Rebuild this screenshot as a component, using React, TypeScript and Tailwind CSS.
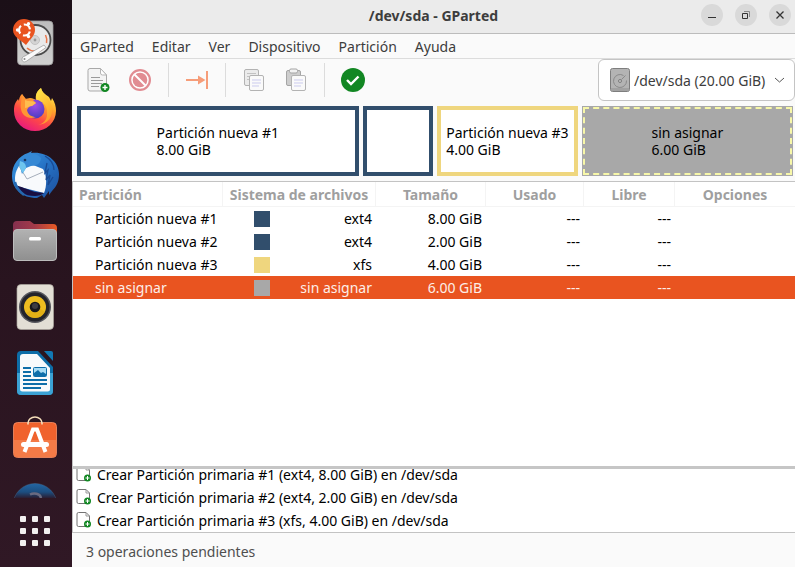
import type { ReactNode } from "react";

const NAVY = "bg-[#314e6c]";
const SAND = "bg-[#efd67e]";
const GREY = "bg-[#a8a8a8]";

type Partition = {
  name: string;
  fs: string;
  size: string;
  swatch: string;
  selected?: boolean;
};

const partitions: Partition[] = [
  { name: "Partición nueva #1", fs: "ext4", size: "8.00 GiB", swatch: NAVY },
  { name: "Partición nueva #2", fs: "ext4", size: "2.00 GiB", swatch: NAVY },
  { name: "Partición nueva #3", fs: "xfs", size: "4.00 GiB", swatch: SAND },
  { name: "sin asignar", fs: "sin asignar", size: "6.00 GiB", swatch: GREY, selected: true },
];

const operations = [
  "Crear Partición primaria #1 (ext4, 8.00 GiB) en /dev/sda",
  "Crear Partición primaria #2 (ext4, 2.00 GiB) en /dev/sda",
  "Crear Partición primaria #3 (xfs, 4.00 GiB) en /dev/sda",
];

const menus = ["GParted", "Editar", "Ver", "Dispositivo", "Partición", "Ayuda"];

/* ---------- dock icons ---------- */

function GPartedIcon() {
  return (
    <svg width="48" height="48" viewBox="0 0 48 48" aria-hidden="true">
      <defs>
        <linearGradient id="gp" x1="0" y1="0" x2="0" y2="1">
          <stop offset="0" stopColor="#bdbdbd" />
          <stop offset="1" stopColor="#d0d0d0" />
        </linearGradient>
      </defs>
      <rect x="6.500" y="2" width="35.500" height="44" rx="4" fill="url(#gp)" stroke="#999" strokeWidth=".8" />
      <circle cx="24.500" cy="21" r="15" fill="#e9e9e9" stroke="#4b4b4b" strokeWidth="1.800" />
      <path d="M16 29a12 12 0 0 0 17 -.5M34.500 16a12 12 0 0 1 1 8" fill="none" stroke="#e9764a" strokeWidth="1.500" />
      <circle cx="24" cy="21" r="4.500" fill="#d4d4d4" stroke="#c2c2c2" />
      <circle cx="24" cy="21" r="1.400" fill="#999" />
      <path d="M33 26l2 2.500-20 14c-2 1-4 0-4-2s1-3 3-3.500z" fill="#fafafa" stroke="#888" strokeWidth=".6" />
      <circle cx="13.500" cy="40" r="1" fill="#888" />
      <path d="M13 0a11 11 0 0 1 11 11c0 6-5 9-9 15C10 21 2 18 2 11A11 11 0 0 1 13 0z" fill="#e95420" />
      <circle cx="13.500" cy="11" r="5.500" fill="none" stroke="#fff" strokeWidth="2.200" strokeDasharray="8.500 3.020" strokeDashoffset="-1.500" />
      <circle cx="6.500" cy="11" r="1.700" fill="#fff" />
      <circle cx="17.500" cy="4.700" r="1.700" fill="#fff" />
      <circle cx="17.500" cy="17.500" r="1.700" fill="#fff" />
    </svg>
  );
}

function FirefoxIcon() {
  return (
    <svg width="48" height="48" viewBox="0 0 48 48" aria-hidden="true">
      <defs>
        <linearGradient id="ff" x1=".8" y1="0" x2=".25" y2="1">
          <stop offset="0" stopColor="#fff44f" />
          <stop offset=".35" stopColor="#ffa52b" />
          <stop offset=".65" stopColor="#ff4a45" />
          <stop offset="1" stopColor="#e61583" />
        </linearGradient>
        <radialGradient id="ffg" cx=".5" cy=".3" r=".7">
          <stop offset="0" stopColor="#a04de8" />
          <stop offset="1" stopColor="#4a3cc0" />
        </radialGradient>
        <linearGradient id="ffy" x1="0" y1="0" x2="1" y2="1">
          <stop offset="0" stopColor="#fff04e" />
          <stop offset="1" stopColor="#ff9a20" />
        </linearGradient>
      </defs>
      <path
        d="M30 3c1 4 4 6 8 9l2 4 1-3c3 4 4 9 4 13a21 20 0 0 1-42 0c0-6 1-8 4-12l1 2c0-3 1-5 3-7l3 5 5-1c3 0 4 1 6 2-1-5 1-9 5-12z"
        fill="url(#ff)"
      />
      <path d="M30 3c-5 4-6 8-4 13 8 1 11 6 10 14 0 5-4 9-9 10 10-1 15-8 14-17-1-8-10-13-11-20z" fill="url(#ffy)" opacity=".8" />
      <circle cx="24" cy="24" r="9.500" fill="url(#ffg)" />
      <path d="M11 9l4 5 6 0 4 4-4 3c-3 0-4 2-5 4 1 5 5 7 9 7-7 3-14-1-15-8-1-5 1-9 1-15z" fill="#ff9635" />
      <path d="M14 15c4 2 7 0 11 3l-4 3c-3 0-5 2-7 2z" fill="#ffbd4f" />
    </svg>
  );
}

function ThunderbirdIcon() {
  return (
    <svg width="48" height="48" viewBox="0 0 48 48" aria-hidden="true">
      <defs>
        <linearGradient id="tb" x1="0" y1="0" x2="1" y2="1">
          <stop offset="0" stopColor="#3c9be2" />
          <stop offset=".5" stopColor="#2672c5" />
          <stop offset="1" stopColor="#1c4f9d" />
        </linearGradient>
      </defs>
      <path d="M17 2l4-2-1 2c15-2 28 8 28 21 0 7-2 12-7 17l-3 4 0-4-5 7-2-3-5 3C11 47 1 38 1 25 1 13 8 5 17 2z" fill="url(#tb)" />
      <path d="M8 15c-4 6-5 12-3 20l28 7c3-7 3-18-1-24L17 12z" fill="#f8fafc" />
      <path d="M4 34c7 2 12 4 20 7l9 1c-2 2-6 3-9 3C13 45 7 40 4 34z" fill="#180f42" />
      <path d="M8 15l8 13 16-7" fill="none" stroke="#a5aebb" />
      <path d="M12 5c6-4 14-3 18 2 0 5-4 8-10 8l-5 2-4 6C9 16 9 10 12 5z" fill="#3689d5" />
      <path d="M9 10c3 1 6 2 6 7l-3 5C8 17 8 14 9 10z" fill="#6dc5ee" />
      <circle cx="14" cy="9" r="1.300" fill="#19375e" />
      <path d="M36 12l-2 10 3-3-2 10 4-5-2 10 5-8M34 5c5 3 9 8 9 14" fill="none" stroke="#194a94" strokeWidth="1.300" />
      <path d="M4 31c1 5 4 9 9 13" fill="none" stroke="#2568af" strokeWidth="2.500" />
    </svg>
  );
}

function FilesIcon() {
  return (
    <svg width="48" height="48" viewBox="0 0 48 48" aria-hidden="true">
      <defs>
        <linearGradient id="fb" x1="0" y1="0" x2="1" y2="0">
          <stop offset="0" stopColor="#85304f" />
          <stop offset=".5" stopColor="#a43b49" />
          <stop offset="1" stopColor="#ea5b24" />
        </linearGradient>
        <linearGradient id="fr" x1="0" y1="0" x2="0" y2="1">
          <stop offset="0" stopColor="#b2b2b2" />
          <stop offset="1" stopColor="#8f8f8f" />
        </linearGradient>
      </defs>
      <path d="M2 8a4 4 0 0 1 4-4h13l4 3h19a4 4 0 0 1 4 4v13H2z" fill="url(#fb)" />
      <rect x="2.500" y="12.500" width="43" height="31" rx="3.500" fill="url(#fr)" stroke="#bdbdbd" />
      <rect x="18" y="20" width="12" height="3.500" rx="1.500" fill="#fff" />
    </svg>
  );
}

function RhythmboxIcon() {
  return (
    <svg width="48" height="48" viewBox="0 0 48 48" aria-hidden="true">
      <rect x="6" y="1.500" width="36.500" height="45" rx="4" fill="#e3dfd5" stroke="#aaa69e" strokeWidth=".7" />
      <circle cx="24" cy="24" r="16" fill="#55565c" />
      <circle cx="24" cy="24" r="14.500" fill="#23242b" />
      <circle cx="24" cy="24" r="11" fill="#edbd20" />
      <path d="M15 30a11 11 0 0 0 19-1l-7-5z" fill="#d9a50e" opacity=".55" />
      <circle cx="24" cy="24" r="5.300" fill="#18181b" />
      <circle cx="24" cy="23" r="3" fill="#3c3c42" />
    </svg>
  );
}

function WriterIcon() {
  return (
    <svg width="48" height="48" viewBox="0 0 48 48" aria-hidden="true">
      <path d="M10 2h17l15 16v24a4 4 0 0 1-4 4H10a4 4 0 0 1-4-4V6a4 4 0 0 1 4-4z" fill="#0d6da7" />
      <path d="M6 24h36v18a4 4 0 0 1-4 4H10a4 4 0 0 1-4-4z" fill="#3ba2d4" />
      <path d="M33 2h7a2 2 0 0 1 2 2v8z" fill="#1279b5" />
      <path d="M12 5h14l13 14v21a2.500 2.500 0 0 1-2.500 2.500h-25A2.500 2.500 0 0 1 9 40V8a3 3 0 0 1 3-3z" fill="#f8fafb" />
      <path d="M12 19h8M12 23h8M12 27h8M12 31h24M12 35h24M12 39h18" stroke="#0e6ea9" strokeWidth="2" />
      <rect x="22.500" y="18.500" width="13" height="9" rx="1" fill="#a8dcf4" stroke="#0e6ea9" />
      <path d="M23 27v-3l4-3 3 3 2-1 3 2v2z" fill="#0e6ea9" />
    </svg>
  );
}

function SoftwareIcon() {
  return (
    <svg width="48" height="48" viewBox="0 0 48 48" aria-hidden="true">
      <rect x="2.500" y="7.500" width="43" height="35" rx="4" fill="#f0622d" stroke="#f79166" strokeWidth=".8" />
      <path d="M3 25h42v13a4 4 0 0 1-4 4H7a4 4 0 0 1-4-4z" fill="#f47b47" />
      <path d="M17 9.500V8a7 6 0 0 1 14 0v1.500" fill="none" stroke="#f6dfbb" strokeWidth="1.600" />
      <path d="M13.500 37L22 14.500h4L34.500 37" fill="none" stroke="#fff" strokeWidth="4" />
      <rect x="10" y="27" width="28" height="5" rx="2.500" fill="#fff" />
    </svg>
  );
}

function HelpIcon() {
  return (
    <svg width="48" height="26" viewBox="0 0 48 26" aria-hidden="true">
      <defs>
        <linearGradient id="hp" gradientUnits="userSpaceOnUse" x1="0" y1="11" x2="0" y2="26">
          <stop offset="0" stopColor="#2367a5" />
          <stop offset=".6" stopColor="#1c4e80" />
          <stop offset="1" stopColor="#2a1e33" />
        </linearGradient>
      </defs>
      <circle cx="24" cy="33.500" r="22" fill="url(#hp)" stroke="#4c7196" strokeOpacity=".4" />
      <path d="M19 22.500c4-2 10-1 11 3.500" fill="none" stroke="#696a80" strokeWidth="2.500" />
    </svg>
  );
}

function GridIcon() {
  const steps = [0, 12, 24];
  return (
    <svg width="30" height="30" viewBox="0 0 30 30" aria-hidden="true">
      {steps.map((y) => steps.map((x) => <rect key={`${x}-${y}`} x={x} y={y} width="6" height="6" rx="1" fill="#f2f1f0" />))}
    </svg>
  );
}

/* ---------- toolbar icons ---------- */

function NewIcon() {
  return (
    <svg width="24" height="26" viewBox="0 0 24 26" aria-hidden="true">
      <path d="M4 1.500h10.500L20.500 8v14a2 2 0 0 1-2 2H4a2 2 0 0 1-2-2V3.500a2 2 0 0 1 2-2z" fill="#f4f4f4" stroke="#a9a9a9" />
      <path d="M14.500 1.500V6a2 2 0 0 0 2 2h4z" fill="#fff" stroke="#b5b5b5" />
      <path d="M5 10.500h9M5 13.500h12M5 16.500h11M5 19.500h8" stroke="#9a9a9a" />
      <circle cx="19" cy="20.500" r="4.500" fill="#128723" />
      <path d="M19 18v5M16.500 20.500h5" stroke="#fff" strokeWidth="1.400" />
    </svg>
  );
}

function ForbiddenIcon() {
  return (
    <svg width="22" height="22" viewBox="0 0 22 22" aria-hidden="true">
      <circle cx="11" cy="11" r="9.900" fill="#fff" stroke="#e18c92" strokeWidth="2.200" />
      <circle cx="11" cy="11" r="7.300" fill="#e18c92" />
      <path d="M5.500 5.500l11 11" stroke="#fff" strokeWidth="2" />
    </svg>
  );
}

function ResizeIcon() {
  return (
    <svg width="24" height="20" viewBox="0 0 24 20" aria-hidden="true">
      <path d="M1 10h14" stroke="#f69d79" strokeWidth="2" />
      <path d="M13 5.500L20.500 10 13 14.500z" fill="#f69d79" />
      <path d="M22 1v18" stroke="#f69d79" strokeWidth="2" />
    </svg>
  );
}

function CopyIcon() {
  return (
    <svg width="22" height="24" viewBox="0 0 22 24" aria-hidden="true">
      <rect x="1.500" y="1.500" width="14" height="16" rx="1.500" fill="#ebebeb" stroke="#b3b3b3" />
      <path d="M4 5.500h9M4 8.500h3M4 11.500h3" stroke="#c2c2c2" />
      <rect x="6.500" y="7.500" width="14" height="15" rx="1.500" fill="#fafafa" stroke="#b3b3b3" />
      <path d="M9 12h9M9 15h9M9 18h7" stroke="#cbcbee" />
    </svg>
  );
}

function PasteIcon() {
  return (
    <svg width="22" height="24" viewBox="0 0 22 24" aria-hidden="true">
      <rect x="1.500" y="2.500" width="14" height="15" rx="1.500" fill="#cdcdcd" stroke="#a5a5a5" />
      <rect x="4.500" y="1" width="8" height="4" rx="1.500" fill="#f2f2f2" stroke="#a5a5a5" />
      <rect x="6.500" y="7.500" width="14" height="15" rx="1.500" fill="#fafafa" stroke="#b3b3b3" />
      <path d="M9 12h9M9 15h9M9 18h7" stroke="#cbcbee" />
    </svg>
  );
}

function ApplyIcon() {
  return (
    <svg width="24" height="24" viewBox="0 0 24 24" aria-hidden="true">
      <circle cx="12" cy="12" r="12" fill="#128723" />
      <path d="M6 12l4 4 7.500-7.500" fill="none" stroke="#fff" strokeWidth="2.400" />
    </svg>
  );
}

function DiskIcon() {
  return (
    <svg width="20" height="24" viewBox="0 0 20 24" aria-hidden="true">
      <rect x=".5" y=".5" width="19" height="23" rx="2" fill="#b4b4b4" stroke="#7e7e7e" />
      <path d="M1 20h18v1.500a1.500 1.500 0 0 1-1.500 1.500h-15A1.500 1.500 0 0 1 1 21.500z" fill="#a2a2a2" />
      <path d="M13.500 7.500A6.500 6.500 0 1 0 16.500 12.500" fill="none" stroke="#8a8a8a" />
      <circle cx="10" cy="13" r="1.500" fill="#c8c8c8" stroke="#7c7c7c" />
      <path d="M11.500 11.500l4-4" stroke="#8a8a8a" />
    </svg>
  );
}

function CreateIcon() {
  return (
    <svg width="16" height="18" viewBox="0 0 16 18" aria-hidden="true">
      <path d="M2.500 .500H10L13.500 4v9a1.500 1.500 0 0 1-1.500 1.500H2.500A1.500 1.500 0 0 1 1 13V2a1.500 1.500 0 0 1 1.500-1.500z" fill="#fff" stroke="#737373" />
      <path d="M10 .500V4h3.500" fill="none" stroke="#9a9a9a" />
      <circle cx="11.500" cy="12" r="3.500" fill="#128723" />
      <path d="M11.500 10v4M9.500 12h4" stroke="#fff" />
    </svg>
  );
}

/* ---------- building blocks ---------- */

function DockButton({ label, children }: { label: string; children: ReactNode }) {
  return (
    <button type="button" aria-label={label} className="flex h-[66px] w-full shrink-0 items-center justify-center pr-[2px]">
      {children}
    </button>
  );
}

function ToolButton({ label, disabled, children }: { label: string; disabled?: boolean; children: ReactNode }) {
  return (
    <button type="button" aria-label={label} disabled={disabled} className="flex h-full w-[42px] items-center justify-center">
      {children}
    </button>
  );
}

function Separator() {
  return <div className="mx-[7px] h-[34px] w-px shrink-0 bg-[#dcdcdc]" />;
}

function WindowButton({ label, children }: { label: string; children: ReactNode }) {
  return (
    <button type="button" aria-label={label} className="flex size-[22px] items-center justify-center rounded-full bg-[#d9d9d9]">
      <svg width="12" height="12" viewBox="0 0 12 12" fill="none" stroke="#333" aria-hidden="true">
        {children}
      </svg>
    </button>
  );
}

function Dock() {
  return (
    <nav aria-label="Dock" className="flex w-[72px] shrink-0 flex-col bg-linear-to-b from-[#1b0f17] via-[#29141f] to-[#301825] pt-[10px]">
      <DockButton label="GParted"><GPartedIcon /></DockButton>
      <DockButton label="Firefox"><FirefoxIcon /></DockButton>
      <DockButton label="Thunderbird"><ThunderbirdIcon /></DockButton>
      <DockButton label="Archivos"><FilesIcon /></DockButton>
      <DockButton label="Rhythmbox"><RhythmboxIcon /></DockButton>
      <DockButton label="LibreOffice Writer"><WriterIcon /></DockButton>
      <DockButton label="Software"><SoftwareIcon /></DockButton>
      <button type="button" aria-label="Ayuda" className="flex h-[26px] w-full shrink-0 justify-center pr-[2px]">
        <HelpIcon />
      </button>
      <DockButton label="Aplicaciones"><GridIcon /></DockButton>
    </nav>
  );
}

function PartitionLabel({ name, size }: { name: string; size: string }) {
  return (
    <div className="leading-[17px] whitespace-nowrap">
      <p>{name}</p>
      <p>{size}</p>
    </div>
  );
}

function PartitionMap() {
  return (
    <div className="grid h-[80px] shrink-0 grid-cols-[8fr_2fr_4fr_6fr] gap-1 py-[5px] pr-[2px] pl-[5px]">
      <div className="flex min-w-0 items-center justify-center border-4 border-[#314e6c] bg-white">
        <PartitionLabel name="Partición nueva #1" size="8.00 GiB" />
      </div>
      <div className="min-w-0 border-4 border-[#314e6c] bg-white" />
      <div className="flex min-w-0 items-center justify-center border-4 border-[#efd67e] bg-white">
        <PartitionLabel name="Partición nueva #3" size="4.00 GiB" />
      </div>
      <div className="flex min-w-0 bg-[#a8a8a8] p-px">
        <div className="flex flex-1 items-center justify-center border-2 border-dashed border-[#f7f7a8]">
          <PartitionLabel name="sin asignar" size="6.00 GiB" />
        </div>
      </div>
    </div>
  );
}

function PartitionTable() {
  const head = "border-r border-b border-[#f4f4f4] p-0 text-center font-bold";
  return (
    <div className="min-h-0 flex-1 overflow-hidden border-t border-l border-[#c3c3c3] bg-white">
      <table className="w-full table-fixed border-separate border-spacing-0 text-[14px]">
        <colgroup>
          <col className="w-[150px]" />
          <col className="w-[153px]" />
          <col className="w-[110px]" />
          <col className="w-[98px]" />
          <col className="w-[91px]" />
          <col />
        </colgroup>
        <thead>
          <tr className="h-[25px] text-[#9f9f9f]">
            <th className="border-r border-b border-[#f4f4f4] p-0 pl-[6px] text-left font-bold">Partición</th>
            <th className={head}>Sistema de archivos</th>
            <th className={head}>Tamaño</th>
            <th className={head}>Usado</th>
            <th className={head}>Libre</th>
            <th className="border-b border-[#f4f4f4] p-0 text-center font-bold">Opciones</th>
          </tr>
        </thead>
        <tbody>
          {partitions.map((p) => (
            <tr key={p.name} className={p.selected ? "h-[23px] bg-[#e95420] text-[#fdeee8]" : "h-[23px] text-black"}>
              <td className="p-0 pl-[22px] whitespace-nowrap">{p.name}</td>
              <td className="p-0">
                <div className="flex items-center justify-between pr-1 pl-[31px]">
                  <span className={`size-4 ${p.swatch}`} />
                  <span>{p.fs}</span>
                </div>
              </td>
              <td className="p-0 pr-1 text-right">{p.size}</td>
              <td className="p-0 pr-1 text-right">---</td>
              <td className="p-0 pr-1 text-right">---</td>
              <td className="p-0" />
            </tr>
          ))}
        </tbody>
      </table>
    </div>
  );
}

export default function App() {
  return (
    <div className="flex h-screen overflow-hidden font-['Noto_Sans','Open_Sans',sans-serif] text-[14px] text-black">
      <Dock />
      <main className="flex min-w-0 flex-1 flex-col bg-[#fafafa]">
        <header className="grid h-[34px] shrink-0 grid-cols-[1fr_auto_1fr] items-center border-b border-[#bcbcbc] bg-[#ebebeb] pb-[3px]">
          <div />
          <h1 className="text-[14px] font-bold text-[#3d3d3d]">/dev/sda - GParted</h1>
          <div className="flex justify-end gap-3 pr-1">
            <WindowButton label="Minimizar"><path d="M2 8.500h8" /></WindowButton>
            <WindowButton label="Restaurar">
              <path d="M2.500 4.500h5v5h-5z" />
              <path d="M4 2.500h5.500V8" stroke="#888" />
            </WindowButton>
            <WindowButton label="Cerrar"><path d="M2.500 2.500l7 7M9.500 2.500l-7 7" strokeWidth="1.300" /></WindowButton>
          </div>
        </header>

        <nav aria-label="Menú" className="flex h-[25px] shrink-0 gap-[2px] border-b border-[#dcdcdc] text-[#3d3d3d]">
          {menus.map((m) => (
            <button key={m} type="button" className="px-2">{m}</button>
          ))}
        </nav>

        <div role="toolbar" aria-label="Herramientas" className="flex h-[42px] shrink-0 items-center pl-[5px]">
          <ToolButton label="Nueva"><NewIcon /></ToolButton>
          <ToolButton label="Eliminar" disabled><ForbiddenIcon /></ToolButton>
          <Separator />
          <ToolButton label="Redimensionar" disabled><ResizeIcon /></ToolButton>
          <Separator />
          <ToolButton label="Copiar" disabled><CopyIcon /></ToolButton>
          <ToolButton label="Pegar" disabled><PasteIcon /></ToolButton>
          <Separator />
          <ToolButton label="Aplicar"><ApplyIcon /></ToolButton>
          <div className="relative ml-auto h-[42px] w-[197px]">
            <select aria-label="Dispositivo" className="h-full w-full appearance-none rounded-[6px] border border-[#c4c4c4] bg-white pl-[35px] text-[14px] text-[#3d3d3d]">
              <option>/dev/sda (20.00 GiB)</option>
            </select>
            <span className="pointer-events-none absolute inset-y-0 left-3 flex items-center"><DiskIcon /></span>
            <svg className="pointer-events-none absolute inset-y-0 right-[10px] my-auto" width="11" height="7" viewBox="0 0 11 7" fill="none" stroke="#555" aria-hidden="true">
              <path d="M1 1l4.500 4L10 1" />
            </svg>
          </div>
        </div>

        <PartitionMap />
        <PartitionTable />

        <ul className="flex h-[67px] shrink-0 flex-col justify-end overflow-hidden border-t-3 border-b border-l border-t-[#c6c6c6] border-b-[#c3c3c3] border-l-[#c3c3c3] bg-white">
          {operations.map((op) => (
            <li key={op} className="flex h-[23px] shrink-0 items-center gap-[5px] pl-[3px] whitespace-nowrap">
              <CreateIcon />
              <span>{op}</span>
            </li>
          ))}
        </ul>

        <footer className="flex h-[34px] shrink-0 items-center pt-[2px] pl-[14px] text-[#4f4f4f]">3 operaciones pendientes</footer>
      </main>
    </div>
  );
}
